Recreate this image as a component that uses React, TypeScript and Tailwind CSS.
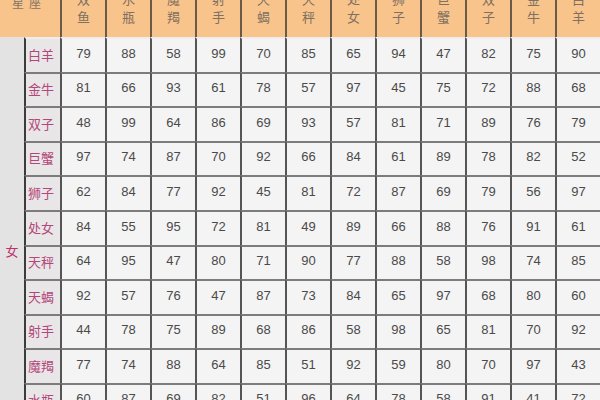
const cols = ['双鱼', '水瓶', '魔羯', '射手', '天蝎', '天秤', '处女', '狮子', '巨蟹', '双子', '金牛', '白羊']

const rows: [string, number[]][] = [
  ['白羊', [79, 88, 58, 99, 70, 85, 65, 94, 47, 82, 75, 90]],
  ['金牛', [81, 66, 93, 61, 78, 57, 97, 45, 75, 72, 88, 68]],
  ['双子', [48, 99, 64, 86, 69, 93, 57, 81, 71, 89, 76, 79]],
  ['巨蟹', [97, 74, 87, 70, 92, 66, 84, 61, 89, 78, 82, 52]],
  ['狮子', [62, 84, 77, 92, 45, 81, 72, 87, 69, 79, 56, 97]],
  ['处女', [84, 55, 95, 72, 81, 49, 89, 66, 88, 76, 91, 61]],
  ['天秤', [64, 95, 47, 80, 71, 90, 77, 88, 58, 98, 74, 85]],
  ['天蝎', [92, 57, 76, 47, 87, 73, 84, 65, 97, 68, 80, 60]],
  ['射手', [44, 78, 75, 89, 68, 86, 58, 98, 65, 81, 70, 92]],
  ['魔羯', [77, 74, 88, 64, 85, 51, 92, 59, 80, 70, 97, 43]],
  ['水瓶', [60, 87, 69, 82, 51, 96, 64, 78, 58, 91, 41, 72]],
]

const cjk = '[font-family:"Noto_Sans_CJK_SC",sans-serif]'

function App() {
  return (
    <div className="w-[600px] h-[400px] overflow-hidden bg-white">
      <div className="grid grid-cols-[24px_36px_repeat(12,45px)] grid-rows-[37px_repeat(11,34.6px)]">
        {/* header */}
        <div className="col-span-2 bg-[#f8c48c] relative overflow-hidden">
          <span className={`absolute left-[12px] top-[-6px] text-[12px] text-[#857565] tracking-[5px] ${cjk}`}>
            星座
          </span>
        </div>
        {cols.map((c) => (
          <div
            key={c}
            className="bg-[#f8c48c] border-l-2 border-[#6a5a48] relative overflow-hidden"
          >
            <div
              className={`absolute inset-x-0 top-[-10px] flex flex-col items-center text-[13px] leading-[18px] text-[#807060] ${cjk}`}
            >
              <span>{c[0]}</span>
              <span>{c[1]}</span>
            </div>
          </div>
        ))}

        {/* left 女 column */}
        <div className="row-span-11 bg-[#e3e3e3] flex items-center justify-center pt-[46px]">
          <span className={`text-[13px] text-[#c0306a] ${cjk}`}>女</span>
        </div>

        {rows.map(([name, vals], i) => {
          const top = i === 0 ? 'border-t-2 border-t-[#ededed]' : 'border-t-2 border-t-[#7c7c7c]'
          return [
            <div
              key={name}
              className={`bg-[#e9e6e8] border-l-2 border-l-[#3c3c3c] ${top} flex items-center pl-[2px] pb-[2px] text-[13px] text-[#b3467a] ${cjk}`}
            >
              {name}
            </div>,
            ...vals.map((v, j) => (
              <div
                key={name + j}
                className={`bg-[#f4f4f4] border-l-2 border-l-[#555555] ${top} flex items-center justify-center pb-[4px] text-[13px] text-[#4a4a4a] [font-family:"Liberation_Sans",sans-serif]`}
              >
                {v}
              </div>
            )),
          ]
        })}
      </div>
    </div>
  )
}

export default App
